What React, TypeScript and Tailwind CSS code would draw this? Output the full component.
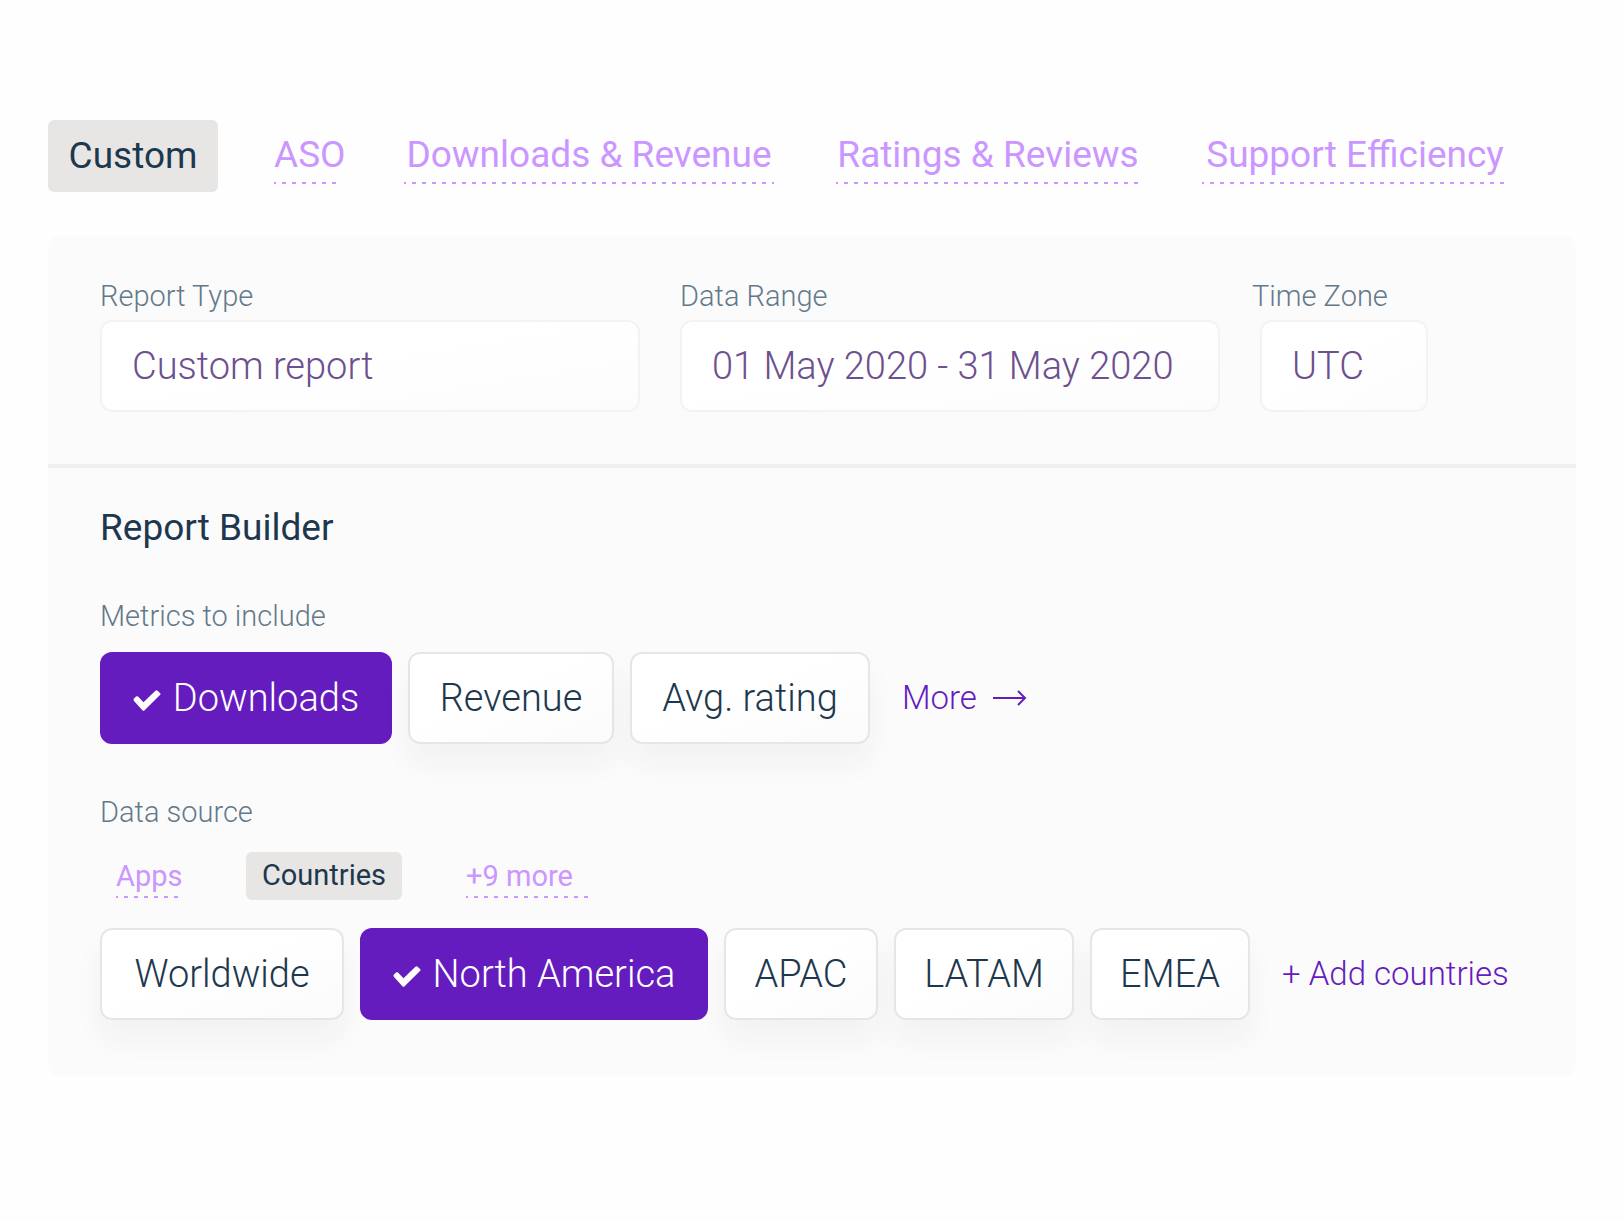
import { useState } from "react";
import clsx from "clsx";

const REPORT_TABS = [
  { label: "Custom", width: "w-[170px]" },
  { label: "ASO", width: "w-[68px]" },
  { label: "Downloads & Revenue", width: "w-[370px]" },
  { label: "Ratings & Reviews", width: "w-[304px]" },
  { label: "Support Efficiency", width: "w-[306px]" },
];

const METRICS = [
  { label: "Downloads", width: "w-[292px]" },
  { label: "Revenue", width: "w-[206px]" },
  { label: "Avg. rating", width: "w-[240px]" },
];

const REGIONS = [
  { label: "Worldwide", width: "w-[244px]" },
  { label: "North America", width: "w-[348px]" },
  { label: "APAC", width: "w-[154px]" },
  { label: "LATAM", width: "w-[180px]" },
  { label: "EMEA", width: "w-[160px]" },
];

function DottedLine() {
  return (
    <span className="block h-0.5 w-full bg-[repeating-linear-gradient(90deg,#cb96ff_0_2px,transparent_2px_8px,#cb96ff_8px_10px)]" />
  );
}

function CheckMark() {
  return (
    <svg viewBox="0 0 28 21" className="mt-1 h-[21px] w-7 shrink-0" fill="none" aria-hidden="true">
      <path
        d="M1 8.6 3 6.6Q4 5.8 5 6.6L10.5 12.2 22.4.7Q23.5-.2 24.6.7L27 3Q28 4 27 5L11.6 20.3Q10.5 21.3 9.4 20.3L1 11Q0 9.8 1 8.6Z"
        fill="currentColor"
      />
    </svg>
  );
}

interface ChipProps {
  label: string;
  width: string;
  selected: boolean;
  onToggle: () => void;
}

function Chip({ label, width, selected, onToggle }: ChipProps) {
  return (
    <button
      type="button"
      aria-pressed={selected}
      onClick={onToggle}
      className={clsx(
        "flex h-[92px] shrink-0 items-center justify-center gap-3 rounded-xl border-2 text-[38px] font-[350] whitespace-nowrap",
        width,
        selected
          ? "border-[#651cbf] bg-[#651cbf] text-white"
          : "border-[#e7e5e5] bg-linear-to-br from-white from-40% to-[#fbfbfb] text-[#1d384e] shadow-[0_20px_30px_rgba(60,50,40,0.045)]"
      )}
    >
      {selected && <CheckMark />}
      {label}
    </button>
  );
}

interface FieldProps {
  id: string;
  label: string;
  value: string;
  className: string;
  inputClassName?: string;
}

function Field({ id, label, value, className, inputClassName }: FieldProps) {
  return (
    <div className={clsx("flex flex-col gap-1", className)}>
      <label htmlFor={id} className="text-[29px] leading-10 font-[350] text-[#63798b]">
        {label}
      </label>
      <input
        id={id}
        type="text"
        defaultValue={value}
        className={clsx(
          "h-[92px] min-w-0 rounded-xl border-2 border-[#f7f2ee] bg-linear-to-br from-white from-40% to-[#fcfcfc] px-[30px] text-[38px] font-[350] text-[#6d5090] outline-none",
          inputClassName
        )}
      />
    </div>
  );
}

function toggle(list: string[], item: string) {
  return list.includes(item) ? list.filter((i) => i !== item) : [...list, item];
}

export default function App() {
  const [tab, setTab] = useState("Custom");
  const [metrics, setMetrics] = useState(["Downloads"]);
  const [regions, setRegions] = useState(["North America"]);

  return (
    <main className="min-h-screen bg-[#fefefe] px-12 py-[120px] font-['Roboto',sans-serif]">
      <nav className="flex items-center gap-[62px]" aria-label="Report templates">
        {REPORT_TABS.map(({ label, width }) => (
          <button
            key={label}
            type="button"
            onClick={() => setTab(label)}
            className={clsx(
              "shrink-0 text-[37px] font-[450] whitespace-nowrap",
              width,
              tab === label
                ? "-mr-1.5 h-[72px] rounded-md bg-[#e7e6e4] text-[#1d384e]"
                : "text-[#cb96ff]"
            )}
          >
            <span className="block leading-[54px]">{label}</span>
            {tab !== label && <DottedLine />}
          </button>
        ))}
      </nav>

      <div className="mt-11 rounded-xl bg-[#fbfbfb]">
        <section className="flex gap-10 border-b-4 border-[#f0f0f0] px-[52px] pt-10 pb-[52px]">
          <Field id="report-type" label="Report Type" value="Custom report" className="w-[540px]" />
          <Field id="data-range" label="Data Range" value="01 May 2020 - 31 May 2020" className="w-[540px]" />
          <Field id="time-zone" label="Time Zone" value="UTC" className="-ml-2 w-44" inputClassName="ml-2" />
        </section>

        <section className="px-[52px] pt-9 pb-14">
          <h1 className="text-[37px] leading-[48px] font-[450] text-[#1d384e]">Report Builder</h1>

          <h2 className="mt-11 text-[29px] leading-10 font-[350] text-[#63798b]">Metrics to include</h2>
          <div className="mt-4 flex items-center gap-4">
            {METRICS.map((metric) => (
              <Chip
                key={metric.label}
                {...metric}
                selected={metrics.includes(metric.label)}
                onToggle={() => setMetrics(toggle(metrics, metric.label))}
              />
            ))}
            <a href="#metrics" className="ml-4 flex items-center gap-4 text-[33px] font-[350] text-[#651cbf]">
              More
              <svg viewBox="0 0 34 16" className="h-4 w-[34px]" fill="none" aria-hidden="true">
                <path d="M0 8h32M25 1l7 7-7 7" stroke="currentColor" strokeWidth="2" />
              </svg>
            </a>
          </div>

          <h2 className="mt-12 text-[29px] leading-10 font-[350] text-[#63798b]">Data source</h2>
          <div className="mt-5 flex items-center pl-4 text-[29px] font-[450]">
            <button type="button" className="w-[66px] text-[#cb96ff]">
              <span className="block pt-0.5 leading-10">Apps</span>
              <DottedLine />
            </button>
            <button type="button" className="ml-16 h-12 w-[156px] rounded-md bg-[#e7e6e4] text-[#1d384e]">
              Countries
            </button>
            <button type="button" className="ml-16 w-[122px] text-left text-[#cb96ff]">
              <span className="block pt-0.5 leading-10">+9 more</span>
              <DottedLine />
            </button>
          </div>
          <div className="mt-7 flex items-center gap-4">
            {REGIONS.map((region) => (
              <Chip
                key={region.label}
                {...region}
                selected={regions.includes(region.label)}
                onToggle={() => setRegions(toggle(regions, region.label))}
              />
            ))}
            <a href="#countries" className="ml-4 text-[33px] font-[350] whitespace-nowrap text-[#651cbf]">
              + Add countries
            </a>
          </div>
        </section>
      </div>
    </main>
  );
}
